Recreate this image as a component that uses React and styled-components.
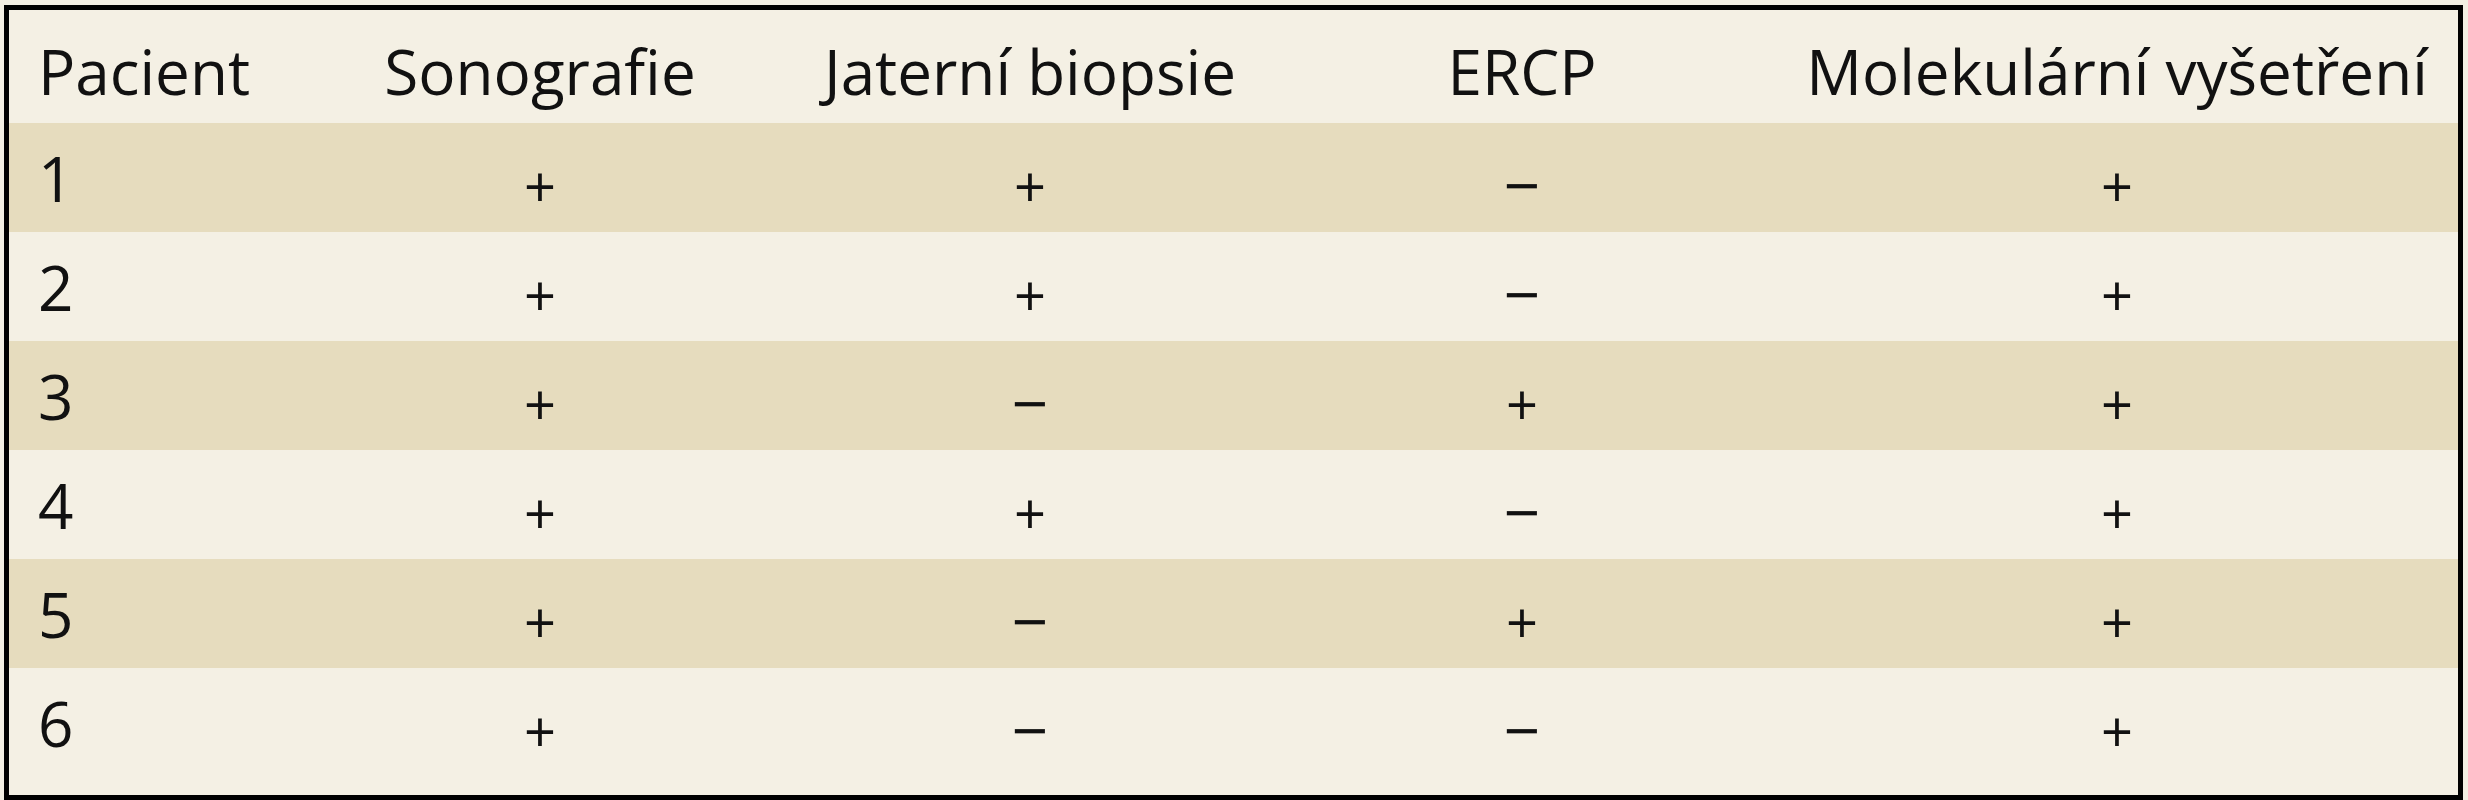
import styled, { createGlobalStyle } from 'styled-components';

const GlobalStyle = createGlobalStyle`
  body {
    margin: 0;
    background: #f3efe3;
    font-family: 'Open Sans', 'Liberation Sans', sans-serif;
    color: #111;
  }
`;

const columns = ['Pacient', 'Sonografie', 'Jaterní biopsie', 'ERCP', 'Molekulární vyšetření'];

const rows = [
  ['1', '+', '+', '−', '+'],
  ['2', '+', '+', '−', '+'],
  ['3', '+', '−', '+', '+'],
  ['4', '+', '+', '−', '+'],
  ['5', '+', '−', '+', '+'],
  ['6', '+', '−', '−', '+'],
];

const App = () => {
  return (
    <>
      <GlobalStyle />
      <Wrapper>
        <Table>
          <HeaderRow>
            {columns.map((title, i) => (
              <HeadCell key={title} $first={i === 0}>
                {title}
              </HeadCell>
            ))}
          </HeaderRow>
          {rows.map((row, r) => (
            <Row key={r} $shaded={r % 2 === 0}>
              {row.map((value, i) =>
                i === 0 ? (
                  <NumberCell key={i}>{value}</NumberCell>
                ) : (
                  <SignCell key={i} $minus={value === '−'}>
                    {value}
                  </SignCell>
                )
              )}
            </Row>
          ))}
          <Footer />
        </Table>
      </Wrapper>
    </>
  );
};

const Wrapper = styled.div`
  padding: 5px 0 0 4px;
`;

const Table = styled.div`
  box-sizing: border-box;
  width: 2459px;
  height: 795px;
  border: 5px solid #000;
  background: #f4f0e4;
`;

const gridColumns = '279px 504px 476px 508px 682px';

const HeaderRow = styled.div`
  display: grid;
  grid-template-columns: ${gridColumns};
  align-items: center;
  box-sizing: border-box;
  height: 113px;
  padding-top: 9px;
`;

const HeadCell = styled.div`
  font-size: 62px;
  line-height: 1;
  text-align: ${(p) => (p.$first ? 'left' : 'center')};
  padding-left: ${(p) => (p.$first ? '29px' : '0')};
  white-space: nowrap;
`;

const Row = styled.div`
  display: grid;
  grid-template-columns: ${gridColumns};
  align-items: center;
  height: 109px;
  background: ${(p) => (p.$shaded ? '#e6dcbe' : 'transparent')};
`;

const NumberCell = styled.div`
  font-size: 62px;
  line-height: 1;
  padding-left: 29px;
`;

const SignCell = styled.div`
  font-size: ${(p) => (p.$minus ? '64px' : '56px')};
  line-height: 56px;
  padding-top: 14px;
  text-align: center;
`;

const Footer = styled.div`
  height: 18px;
`;

export default App;
